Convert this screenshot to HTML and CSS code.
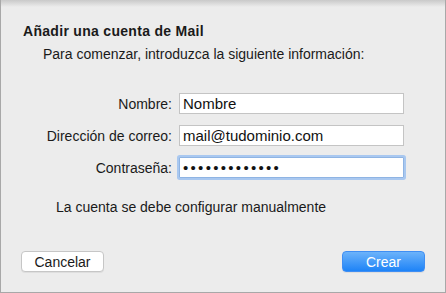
FILE: index.html
```html
<!DOCTYPE html>
<html lang="es">
<head>
    <meta charset="UTF-8">
    <title>Añadir una cuenta de Mail</title>
    <link rel="stylesheet" href="styles.css">
</head>
<body>
    <div class="sheet">
        <h1 class="sheet-title">Añadir una cuenta de Mail</h1>
        <p class="intro">Para comenzar, introduzca la siguiente información:</p>

        <div class="form">
            <label class="field-label" for="name">Nombre:</label>
            <input class="field" id="name" type="text" value="Nombre">

            <label class="field-label" for="email">Dirección de correo:</label>
            <input class="field" id="email" type="text" value="mail@tudominio.com">

            <label class="field-label" for="pass">Contraseña:</label>
            <input class="field focused" id="pass" type="password" value="mipassword12a">
        </div>

        <p class="note">La cuenta se debe configurar manualmente</p>

        <div class="buttons">
            <button class="btn">Cancelar</button>
            <button class="btn primary">Crear</button>
        </div>
    </div>
</body>
</html>
```

FILE: styles.css
```css
/* General */
body {
    margin: 0;
    padding: 0;
    background-color: #ececec;
    font-family: "Liberation Sans", Arial, sans-serif;
    color: #1a1a1a;
}

/* Hoja del dialogo */
.sheet {
    box-sizing: border-box;
    width: 446px;
    height: 293px;
    background: linear-gradient(#c9c9c9, #ececec 7px);
    border-left: 1px solid #a8a8a8;
    border-right: 1px solid #a8a8a8;
    border-bottom: 1px solid #a8a8a8;
    padding: 23px 20px 0 22px;
    display: flex;
    flex-direction: column;
}

.sheet-title {
    margin: 0;
    font-size: 14px;
    font-weight: bold;
    letter-spacing: 0.3px;
}

.intro {
    margin: 7px 0 0 20px;
    font-size: 14px;
}

.form {
    display: grid;
    grid-template-columns: 149px 225px;
    column-gap: 7px;
    row-gap: 11px;
    align-items: center;
    margin-top: 31px;
}

.field-label {
    text-align: right;
    font-size: 14px;
}

.field {
    box-sizing: border-box;
    height: 21px;
    margin: 0;
    padding: 0 3px;
    border: 1px solid #c4c4c4;
    background: #fff;
    font-family: "Liberation Sans", Arial, sans-serif;
    font-size: 15px;
    color: #111;
    outline: none;
}

.field.focused {
    border-color: #8fb4e3;
    border-radius: 1px;
    box-shadow: 0 0 0 2px #a9c8f0;
    letter-spacing: 2.3px;
}

.note {
    margin: 21px 0 0 33px;
    font-size: 14px;
}

.buttons {
    display: flex;
    justify-content: space-between;
    margin-top: auto;
    margin-bottom: 20px;
    margin-left: -2px;
}

.btn {
    width: 83px;
    height: 21px;
    border: 1px solid #c6c6c6;
    border-radius: 4px;
    background: #fff;
    font-family: "Liberation Sans", Arial, sans-serif;
    font-size: 14px;
    color: #1a1a1a;
    box-shadow: 0 1px 0 rgba(0, 0, 0, 0.06);
}

.btn.primary {
    border-color: #3f8ef3;
    background: linear-gradient(#6cb3fa, #1e83f7);
    color: #fff;
}
```
